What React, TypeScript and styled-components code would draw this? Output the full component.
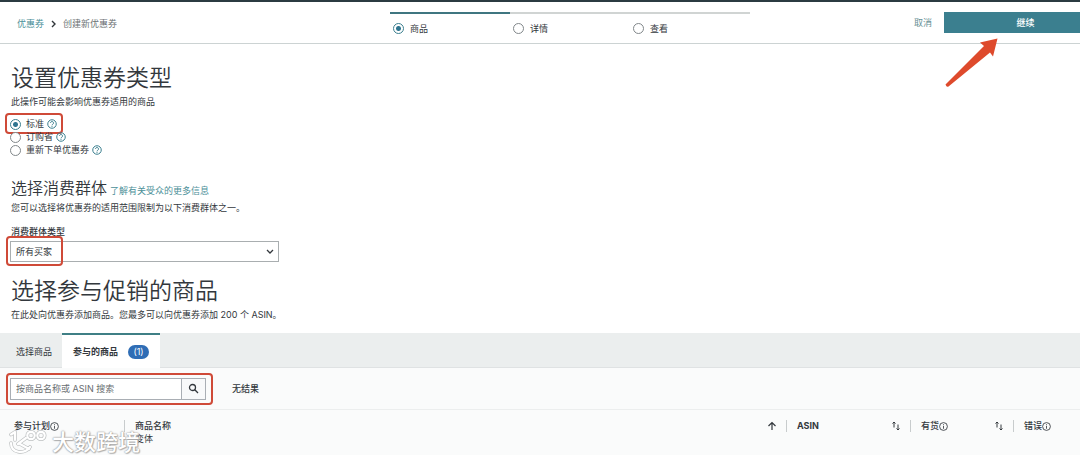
import React from 'react';
import styled, { createGlobalStyle, css } from 'styled-components';

const teal = '#3b7f8f';
const link = '#4b8f98';
const ink = '#33383d';
const red = '#cf4a38';

const GlobalStyle = createGlobalStyle`
  * { box-sizing: border-box; }
  body {
    margin: 0;
    background: #fff;
    color: ${ink};
    font-family: Inter, "Noto Sans CJK SC", sans-serif;
    font-size: 9px;
    line-height: 12px;
  }
  button, input, select { font: inherit; color: inherit; margin: 0; }
  h1, h2, p { margin: 0; font-weight: 400; }
  a { text-decoration: none; }
`;

const Header = styled.header`
  display: grid;
  grid-template-columns: 13fr 360px 11fr;
  height: 44px;
  border-top: 2px solid #2b3b41;
  border-bottom: 1px solid #ccd3d3;
`;

const Breadcrumb = styled.nav`
  display: flex;
  align-items: center;
  gap: 6px;
  height: 20px;
  margin-top: 12px;
  padding-left: 17px;
  color: #6d7375;
`;

const TextLink = styled.a`
  color: ${link};
`;

const Steps = styled.div`
  display: grid;
  grid-template-columns: repeat(3, 1fr);
  margin-top: 10px;
`;

const Step = styled.label<{ $current?: boolean }>`
  display: flex;
  align-items: flex-start;
  gap: 6px;
  padding: 9px 0 0 3px;
  border-top: 2px solid ${p => (p.$current ? '#3f7680' : '#d0d4d3')};
`;

const Radio = styled.input.attrs({ type: 'radio' })`
  appearance: none;
  flex: none;
  width: 11px;
  height: 11px;
  border: 1px solid #81878a;
  border-radius: 50%;
  background: #fff;
  &:checked {
    border-color: ${teal};
    background: radial-gradient(circle, #2f7590 0 2px, #fff 3px);
  }
`;

const Actions = styled.div`
  position: relative;
  display: flex;
  justify-content: flex-end;
  align-items: center;
  gap: 12px;
  height: 21px;
  margin-top: 10px;
`;

const PlainButton = styled.button`
  padding: 0;
  border: 0;
  background: none;
  color: #668f94;
`;

const PrimaryButton = styled.button`
  width: 136px;
  height: 21px;
  padding: 0 0 0 27px;
  border: 0;
  background: ${teal};
  color: #fff;
  text-align: center;
  font-weight: 500;
`;

const Arrow = styled.svg`
  position: absolute;
  top: 24px;
  right: 80px;
`;

const Section = styled.section`
  padding: 0 11px;
`;

const Title = styled.h1`
  font-size: 23px;
  line-height: 32px;
  font-weight: 350;
`;

const TypeSection = styled(Section)`
  padding-top: 18px;
`;

const Options = styled.div`
  display: flex;
  flex-direction: column;
  align-items: flex-start;
  gap: 1px;
  margin-top: 10px;
`;

const Option = styled.label`
  position: relative;
  display: flex;
  align-items: center;
  gap: 5px;
  height: 12px;
  margin-left: -1px;
`;

const OptionText = styled.span`
  display: flex;
  align-items: center;
  gap: 3px;
`;

const Highlight = styled.span<{ $inset: string }>`
  position: absolute;
  inset: ${p => p.$inset};
  border: 2px solid ${red};
  border-radius: 4px;
  pointer-events: none;
`;

const AudienceSection = styled(Section)`
  padding-top: 20px;
`;

const Subtitle = styled.h2`
  font-size: 16px;
  line-height: 24px;
  font-weight: 350;
`;

const SubtitleRow = styled.div`
  display: flex;
  align-items: baseline;
  gap: 3px;
`;

const Hint = styled.p`
  padding-top: 2px;
`;

const FieldLabel = styled.label`
  display: block;
  margin-top: 12px;
  font-weight: 500;
`;

const SelectBox = styled.div`
  position: relative;
  display: flex;
  align-items: center;
  width: 269px;
  margin: 3px 0 0 -1px;
  svg { position: absolute; right: 5px; pointer-events: none; }
`;

const Select = styled.select`
  appearance: none;
  width: 100%;
  height: 21px;
  padding: 0 5px;
  border: 1px solid #a9aeb0;
  border-radius: 0;
  background: #fff;
`;

const ProductSection = styled(Section)`
  padding-top: 13px;
`;

const Tabs = styled.div`
  display: flex;
  height: 35px;
  margin-top: 12px;
  border-bottom: 1px solid #dfe2e3;
  background: #ebeeee;
`;

const Tab = styled.button<{ $active?: boolean }>`
  display: flex;
  align-items: center;
  gap: 10px;
  height: 35px;
  padding: 0 10px 0 16px;
  border: 0;
  border-top: 2px solid transparent;
  background: none;
  ${p => p.$active && css`
    padding: 0 11px;
    border-top-color: #3f7f85;
    background: #fff;
    font-weight: 700;
  `}
`;

const Badge = styled.span`
  width: 21px;
  height: 14px;
  border-radius: 7px;
  background: #2f6db5;
  color: #fff;
  line-height: 14px;
  text-align: center;
  font-weight: 400;
`;

const Toolbar = styled.div`
  display: flex;
  align-items: center;
  gap: 26px;
  height: 42px;
  padding-left: 10px;
  border-bottom: 1px solid #eceeee;
  background: #fafbfb;
  font-weight: 500;
`;

const Search = styled.form`
  position: relative;
  display: flex;
  width: 196px;
  height: 22px;
  border: 1px solid #a9aeb4;
  font-weight: 400;
`;

const SearchInput = styled.input`
  flex: 1;
  min-width: 0;
  padding: 0 5px;
  border: 0;
  background: #fff;
  &::placeholder { color: #686d70; opacity: 1; }
`;

const SearchButton = styled.button`
  display: grid;
  place-items: center;
  width: 24px;
  padding: 0;
  border: 0;
  border-left: 1px solid #a9aeb4;
  background: #f8f9fa;
`;

const TableArea = styled.div`
  position: relative;
`;

const Table = styled.table`
  width: 100%;
  height: 45px;
  table-layout: fixed;
  border-collapse: collapse;
  background: #fafbfb;
`;

const HeadCell = styled.th<{ $width?: number }>`
  width: ${p => (p.$width ? `${p.$width}px` : 'auto')};
  padding: 10px 0 0;
  text-align: left;
  vertical-align: top;
  font-weight: 500;
`;

const HeadContent = styled.div<{ $first?: boolean }>`
  display: flex;
  align-items: center;
  height: 12px;
  padding: 0 9px 0 ${p => (p.$first ? 14 : 10)}px;
  border-left: ${p => (p.$first ? '0' : '1px solid #c8cccd')};
  svg:last-child:not(.info) { margin-left: auto; }
`;

const Variant = styled.div`
  padding: 1px 0 0 11px;
  font-weight: 400;
`;

const Watermark = styled.div`
  position: absolute;
  left: 8px;
  top: 18px;
  display: flex;
  align-items: center;
  gap: 4px;
  color: #fff;
  font-size: 22px;
  font-weight: 500;
  line-height: 28px;
  text-shadow: 0 0 1px #999, 0 0 2px #999, 1px 1px 1px #bbb;
`;

const HelpIcon = () => (
  <svg width="10" height="10" viewBox="0 0 20 20" fill="none" stroke={teal} strokeWidth="2" aria-hidden="true">
    <circle cx="10" cy="10" r="8.5" />
    <path d="M7 8a3 3 0 1 1 4.6 2.5C10.5 11.2 10 11.7 10 12.7M10 14.3v1.7" />
  </svg>
);

const InfoIcon = () => (
  <svg className="info" width="9" height="9" viewBox="0 0 18 18" fill="none" stroke={ink} strokeWidth="1.7" aria-hidden="true">
    <circle cx="9" cy="9" r="7.8" />
    <path d="M9 8v5.5M9 4.5v2" />
  </svg>
);

const SortIcon = () => (
  <svg width="10" height="10" viewBox="0 0 20 20" fill="none" stroke={ink} strokeWidth="2" aria-hidden="true">
    <path d="M6 13V2M3 5l3-3 3 3M14 7v11M11 15l3 3 3-3" />
  </svg>
);

const SortUpIcon = () => (
  <svg width="10" height="10" viewBox="0 0 20 20" fill="none" stroke={ink} strokeWidth="2.4" aria-hidden="true">
    <path d="M10 18V3M3 10l7-7 7 7" />
  </svg>
);

const types = [
  { name: '标准', marked: true },
  { name: '订购省' },
  { name: '重新下单优惠券' },
];

const logoStrokes: [string, number][] = [['#bdc0c1', 3.6], ['#fff', 2.2]];

export default function App() {
  return (
    <>
      <GlobalStyle />
      <Header>
        <Breadcrumb>
          <TextLink href="#">优惠券</TextLink>
          <svg width="7" height="8" viewBox="0 0 7 8" fill="none" stroke="#30363a" strokeWidth="1.4" aria-hidden="true">
            <path d="M2 1l3 3-3 3" />
          </svg>
          <span>创建新优惠券</span>
        </Breadcrumb>
        <Steps>
          <Step $current><Radio name="step" defaultChecked />商品</Step>
          <Step><Radio name="step" />详情</Step>
          <Step><Radio name="step" />查看</Step>
        </Steps>
        <Actions>
          <PlainButton type="button">取消</PlainButton>
          <PrimaryButton type="button">继续</PrimaryButton>
          <Arrow width="56" height="54" viewBox="0 0 56 54" aria-hidden="true">
            <path d="M53.5 2.500L49 20.500L46 16.500L4.500 50.500Q2.500 51.500 1.500 48.500L40 10L36 6.500Z" fill="#de4a2c" />
          </Arrow>
        </Actions>
      </Header>

      <main>
        <TypeSection>
          <Title>设置优惠券类型</Title>
          <Hint>此操作可能会影响优惠券适用的商品</Hint>
          <Options>
            {types.map(t => (
              <Option key={t.name}>
                <Radio name="type" defaultChecked={t.marked} />
                <OptionText>{t.name}<HelpIcon /></OptionText>
                {t.marked && <Highlight $inset="-5px -6px -4px -5px" />}
              </Option>
            ))}
          </Options>
        </TypeSection>

        <AudienceSection>
          <SubtitleRow>
            <Subtitle>选择消费群体</Subtitle>
            <TextLink href="#">了解有关受众的更多信息</TextLink>
          </SubtitleRow>
          <Hint>您可以选择将优惠券的适用范围限制为以下消费群体之一。</Hint>
          <FieldLabel htmlFor="audience">消费群体类型</FieldLabel>
          <SelectBox>
            <Select id="audience"><option>所有买家</option></Select>
            <svg width="8" height="6" viewBox="0 0 8 6" fill="none" stroke={ink} strokeWidth="1.3" aria-hidden="true">
              <path d="M1 1l3 3 3-3" />
            </svg>
            <Highlight $inset="-5px 216px -4px -4px" />
          </SelectBox>
        </AudienceSection>

        <ProductSection>
          <Title as="h2">选择参与促销的商品</Title>
          <Hint>在此处向优惠券添加商品。您最多可以向优惠券添加 200 个 ASIN。</Hint>
        </ProductSection>

        <Tabs role="tablist">
          <Tab role="tab" type="button">选择商品</Tab>
          <Tab role="tab" type="button" aria-selected $active>参与的商品<Badge>(1)</Badge></Tab>
        </Tabs>
        <Toolbar>
          <Search>
            <SearchInput aria-label="搜索" placeholder="按商品名称或 ASIN 搜索" />
            <SearchButton type="button" aria-label="搜索">
              <svg width="11" height="11" viewBox="0 0 11 11" fill="none" stroke={ink} strokeWidth="1.3" aria-hidden="true">
                <circle cx="4.5" cy="4.5" r="3" />
                <path d="M6.8 6.8L10 10" />
              </svg>
            </SearchButton>
            <Highlight $inset="-6px -8px -6px -5px" />
          </Search>
          <span>无结果</span>
        </Toolbar>
        <TableArea>
          <Table>
            <thead>
              <tr>
                <HeadCell $width={124}><HeadContent $first>参与计划<InfoIcon /></HeadContent></HeadCell>
                <HeadCell>
                  <HeadContent>商品名称<SortUpIcon /></HeadContent>
                  <Variant>变体</Variant>
                </HeadCell>
                <HeadCell $width={124}><HeadContent><b>ASIN</b><SortIcon /></HeadContent></HeadCell>
                <HeadCell $width={103}><HeadContent>有货<InfoIcon /><SortIcon /></HeadContent></HeadCell>
                <HeadCell $width={67}><HeadContent>错误<InfoIcon /></HeadContent></HeadCell>
              </tr>
            </thead>
          </Table>
          <Watermark>
            <svg width="40" height="26" viewBox="0 0 40 26" fill="none" strokeLinecap="round" strokeLinejoin="round" aria-hidden="true">
              {logoStrokes.map(([color, width]) => (
                <g key={color} stroke={color} strokeWidth={width}>
                  <path d="M3 5.500L7 3v8M3 14c0 10 13 12 19 4M10 15l8-6M12 15l9 5" />
                  <circle cx="23" cy="6.500" r="3.700" />
                  <circle cx="33" cy="6.500" r="3.700" />
                </g>
              ))}
            </svg>
            <span>大数跨境</span>
          </Watermark>
        </TableArea>
      </main>
    </>
  );
}
